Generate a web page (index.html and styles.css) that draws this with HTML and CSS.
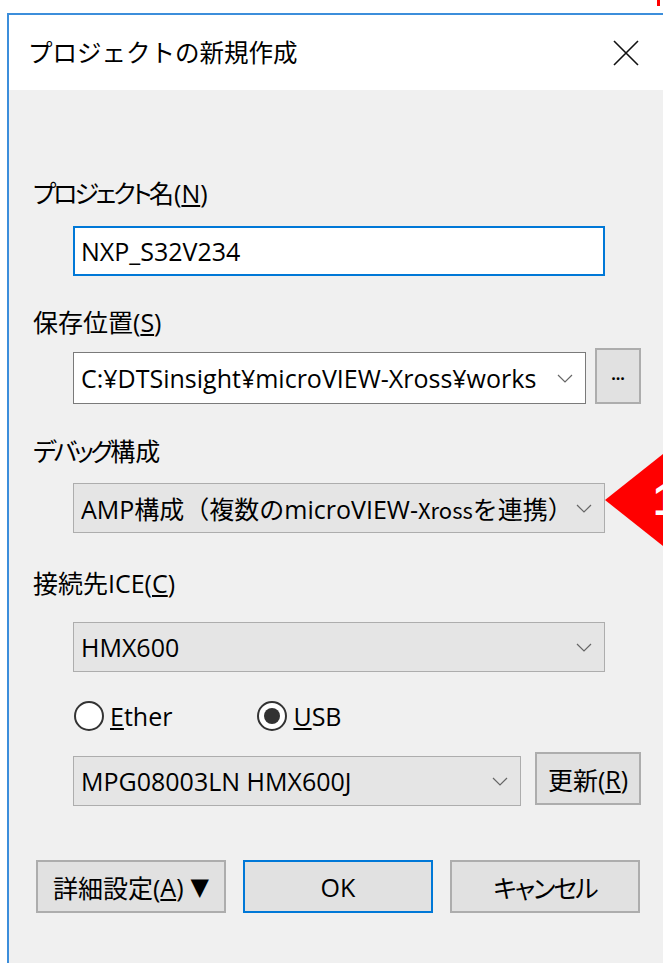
FILE: index.html
```html
<!DOCTYPE html>
<html lang="ja">
<head>
<meta charset="utf-8">
<title>プロジェクトの新規作成</title>
<link rel="stylesheet" href="styles.css">
</head>
<body>
<div class="page">
  <div class="corner-mark"></div>
  <div class="window">
    <div class="titlebar">
      <div class="title">プロジェクトの新規作成</div>
      <div class="close">
        <svg width="26" height="26" viewBox="0 0 26 26"><path d="M1 1 L25 25 M25 1 L1 25" stroke="#111" stroke-width="1.6" fill="none"/></svg>
      </div>
    </div>
    <div class="content">
      <div class="label l-name"><span class="kana">プロジェクト</span>名(<u>N</u>)</div>
      <div class="textbox">NXP_S32V234</div>

      <div class="label l-path">保存位置(<u>S</u>)</div>
      <div class="row path-row">
        <div class="combo edit path-combo">
          <span class="value">C:¥DTSinsight¥microVIEW-Xross¥works</span>
          <svg class="chev" width="16" height="9" viewBox="0 0 16 9"><polyline points="1,1 8,8 15,1" fill="none" stroke="#666" stroke-width="1.2"/></svg>
        </div>
        <div class="btn browse">...</div>
      </div>

      <div class="label l-debug"><span class="kana">デバッグ</span>構成</div>
      <div class="combo list debug-combo">
        <span class="value full">AMP構成（複数のmicroVIEW-<span class="narrow">Xross</span>を連携）</span>
        <svg class="chev" width="16" height="9" viewBox="0 0 16 9"><polyline points="1,1 8,8 15,1" fill="none" stroke="#666" stroke-width="1.2"/></svg>
      </div>

      <div class="label l-ice">接続先ICE(<u>C</u>)</div>
      <div class="combo list ice-combo">
        <span class="value">HMX600</span>
        <svg class="chev" width="16" height="9" viewBox="0 0 16 9"><polyline points="1,1 8,8 15,1" fill="none" stroke="#666" stroke-width="1.2"/></svg>
      </div>

      <div class="radios">
        <label class="radio"><span class="dot"></span><span><u>E</u>ther</span></label>
        <label class="radio checked"><span class="dot"></span><span><u>U</u>SB</span></label>
      </div>

      <div class="row dev-row">
        <div class="combo list dev-combo">
          <span class="value">MPG08003LN HMX600J</span>
          <svg class="chev" width="16" height="9" viewBox="0 0 16 9"><polyline points="1,1 8,8 15,1" fill="none" stroke="#666" stroke-width="1.2"/></svg>
        </div>
        <div class="btn refresh">更新(<u>R</u>)</div>
      </div>

      <div class="actions">
        <div class="btn action">詳細設定(<u>A</u>)<span class="tri">▼</span></div>
        <div class="btn action default">OK</div>
        <div class="btn action"><span class="kana tight">キャンセル</span></div>
      </div>
    </div>
  </div>
  <div class="callout">
    <svg width="58" height="92" viewBox="0 0 58 92"><polygon points="0,46 58,0 58,92" fill="#ff0000"/></svg>
    <span class="callout-num">1</span>
  </div>
</div>
</body>
</html>
```

FILE: styles.css
```css
html, body {
  margin: 0;
  padding: 0;
  background: #ffffff;
  overflow: hidden;
}

body {
  font-family: "Open Sans", "Noto Sans CJK JP", sans-serif;
  font-feature-settings: "palt";
  color: #000;
}

.page {
  position: relative;
  width: 663px;
  height: 963px;
  overflow: hidden;
}

.corner-mark {
  position: absolute;
  right: 3px;
  top: 0;
  width: 3px;
  height: 6px;
  background: #ff0000;
}

.window {
  margin: 13px 0 0 7px;
  width: 661px;
  border-top: 2px solid #3c8edb;
  border-left: 2px solid #3c8edb;
  background: #f0f0f0;
  height: 960px;
}

.titlebar {
  height: 75px;
  background: #ffffff;
  display: flex;
  align-items: center;
  justify-content: space-between;
}

.title {
  font-family: "Noto Sans CJK JP", sans-serif;
  font-feature-settings: normal;
  font-size: 24.5px;
  padding-left: 19px;
  padding-bottom: 2px;
}

.close {
  width: 48px;
  height: 48px;
  display: flex;
  align-items: center;
  justify-content: center;
  margin-right: 20px;
}

.content {
  display: flex;
  flex-direction: column;
  align-items: flex-start;
  padding: 0 0 0 24px;
  font-size: 25px;
}

/* Meiryo-style condensed katakana */
.kana { letter-spacing: -3px; }
.kana.tight { letter-spacing: -2px; }

.label {
  line-height: 28px;
  height: 28px;
}

.l-name { margin-top: 89px; }
.l-path { margin-top: 32px; }
.l-debug { margin-top: 33px; }
.l-ice { margin-top: 36px; }

.textbox {
  margin: 19px 0 0 40px;
  box-sizing: border-box;
  width: 532px;
  height: 50px;
  background: #fff;
  border: 2px solid #0078d7;
  padding-left: 6px;
  display: flex;
  align-items: center;
}

.row {
  display: flex;
  align-items: flex-end;
  margin-left: 40px;
}

.path-row { margin-top: 12px; gap: 9px; }
.dev-row { margin-top: 21px; gap: 14px; }

.combo {
  box-sizing: border-box;
  height: 50px;
  display: flex;
  align-items: center;
  padding: 0 12px 0 7px;
  width: 532px;
}

.debug-combo { margin: 18px 0 0 40px; }
.ice-combo { margin: 25px 0 0 40px; }

.combo .value {
  flex: 1;
  white-space: nowrap;
  overflow: hidden;
  min-width: 0;
}

.combo .value.full {
  font-feature-settings: normal;
}

.combo .chev {
  flex: none;
  margin-left: 18px;
}

.combo.edit {
  background: #fff;
  border: 1px solid #7a7a7a;
}

.combo.list {
  background: #e5e5e5;
  border: 1px solid #adadad;
}

.path-combo { width: 513px; height: 52px; }
.dev-combo { width: 448px; }

.narrow {
  font-family: "Noto Sans CJK JP", sans-serif;
  font-size: 22px;
}

.btn {
  box-sizing: border-box;
  background: #e1e1e1;
  border: 2px solid #adadad;
  display: flex;
  align-items: center;
  justify-content: center;
}

.browse {
  width: 46px;
  height: 56px;
  font-size: 16px;
  font-weight: bold;
  padding-bottom: 4px;
}

.refresh {
  width: 106px;
  height: 53px;
  margin-bottom: 1px;
}

.radios {
  display: flex;
  margin: 29px 0 0 41px;
  height: 30px;
  align-items: center;
}

.radio {
  display: flex;
  align-items: center;
  gap: 6px;
}

.radio + .radio { margin-left: 85px; }

.dot {
  box-sizing: border-box;
  width: 30px;
  height: 30px;
  border-radius: 50%;
  border: 2px solid #333;
  background: #fff;
  display: flex;
  align-items: center;
  justify-content: center;
}

.radio.checked .dot::after {
  content: "";
  width: 16px;
  height: 16px;
  border-radius: 50%;
  background: #333;
}

.actions {
  display: flex;
  margin: 54px 0 0 3px;
}

.action {
  width: 190px;
  height: 53px;
}

.action + .action { margin-left: 17px; }

.action.default {
  border-color: #0078d7;
}

.tri {
  font-family: "DejaVu Sans", sans-serif;
  font-size: 24px;
  margin-left: 7px;
}

.callout {
  position: absolute;
  left: 605px;
  top: 454px;
  width: 58px;
  height: 92px;
}

.callout svg { display: block; }

.callout-num {
  position: absolute;
  left: 48px;
  top: 24px;
  color: #fff;
  font-family: "Liberation Sans", sans-serif;
  font-weight: bold;
  font-size: 44px;
  line-height: 1;
}
```
